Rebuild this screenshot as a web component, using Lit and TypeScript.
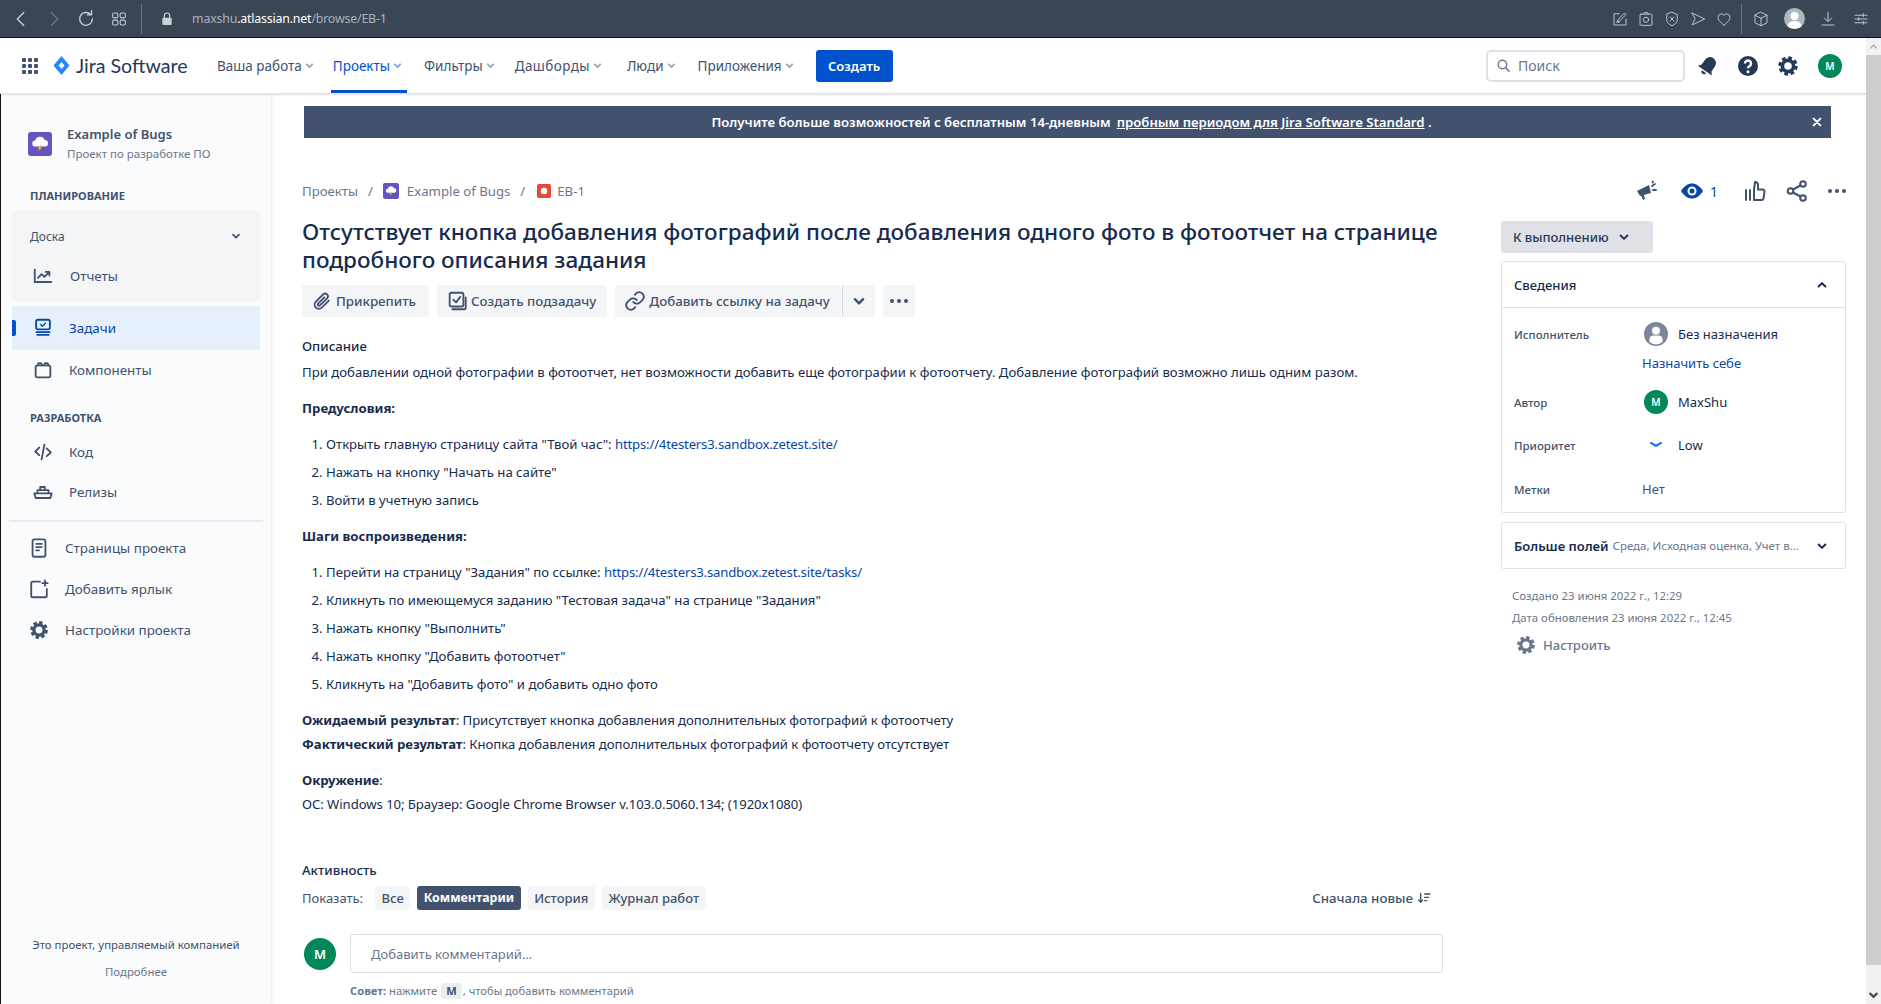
import { LitElement, css, html, svg } from "lit";
import { customElement } from "lit/decorators.js";

const icon = (body: unknown, size = 24, cls = "") =>
  html`<svg class="ic ${cls}" width=${size} height=${size} viewBox="0 0 24 24" fill="none" stroke="currentColor" stroke-width="2" stroke-linecap="round" stroke-linejoin="round">${body}</svg>`;

const chevron = svg`<path d="M7.5 10l4.5 4.5 4.5-4.5" stroke-width="2.6"/>`;
const gear = svg`<circle cx="12" cy="12" r="5.6" stroke-width="3.6"/><circle cx="12" cy="12" r="8" stroke-width="3.4" stroke-dasharray="3.6 2.68" stroke-linecap="butt"/>`;
const dots = svg`<g fill="currentColor" stroke="none"><circle cx="5" cy="12" r="2"/><circle cx="12" cy="12" r="2"/><circle cx="19" cy="12" r="2"/></g>`;
const cloud = svg`<rect width="24" height="24" rx="3" fill="#6554c0" stroke="none"/><path d="M7.4 14.6a3 3 0 0 1-.2-6 4.9 4.9 0 0 1 9.4-.6 3.3 3.3 0 0 1 .2 6.6z" fill="#fff" stroke="none"/><path d="M12.6 13l-3 3.6h2l-1.2 3 3.6-4h-2l1.4-2.6z" fill="#ffc400" stroke="none"/>`;

const planning = [
  { label: "Задачи", active: true, body: svg`<rect x="4.5" y="3" width="15" height="10.5" rx="2"/><path d="M9.5 8.2l1.8 1.8 3.3-3.2" stroke-width="1.6"/><path d="M4 16.5h16M5 19.5h14" stroke-width="1.8" stroke-linecap="butt"/>` },
  { label: "Компоненты", active: false, body: svg`<rect x="4" y="7" width="16" height="13" rx="2"/><path d="M6.5 7V5.5a1 1 0 0 1 1-1h2a1 1 0 0 1 1 1V7M13.5 7V5.5a1 1 0 0 1 1-1h2a1 1 0 0 1 1 1V7"/>` },
];
const dev = [
  { label: "Код", body: svg`<path d="M8 7l-4.500 4.500L8 15.500M16 8l4.500 4.500-4.500 4M13.500 4l-3 16"/>` },
  { label: "Релизы", body: svg`<path d="M2.500 13.500h19l-1.500 5H4zM6 13.500V10h12v3.500M9 10V6.500h5V10"/>` },
];
const project = [
  { label: "Страницы проекта", body: svg`<rect x="5" y="2.500" width="14" height="19" rx="2"/><path d="M9 7.500h6M9 11h6M9 14.500h3"/>` },
  { label: "Добавить ярлык", body: svg`<path d="M13 4H5a1.500 1.500 0 0 0-1.500 1.500v14A1.500 1.500 0 0 0 5 21h14a1.500 1.500 0 0 0 1.500-1.500V12M18.500 2.500v6M15.500 5.500h6" />` },
  { label: "Настройки проекта", body: gear },
];
const navItems = ["Ваша работа", "Проекты", "Фильтры", "Дашборды", "Люди", "Приложения"];

@customElement("app-root")
export class AppRoot extends LitElement {
  static styles = css`
    :host {
      display: block;
      width: 1881px;
      height: 1004px;
      overflow: hidden;
      background: #fff;
      color: #172b4d;
      font-family: "Noto Sans", "Open Sans", sans-serif;
      font-size: 13px;
      --blue: #0052cc;
      --muted: #42526e;
      --subtle: #6b778c;
    }
    * { box-sizing: border-box; }
    .ic { display: block; flex: none; }

    .browser {
      height: 38px;
      background: #3a4654;
      border-bottom: 1px solid #111;
      color: #c8cfd6;
      display: flex;
      align-items: center;
      padding: 0 11px 0 10px;
    }
    .browser .sep { width: 1px; height: 30px; background: #6b7580; margin: 0 17px 0 13px; }
    .browser .dim { color: #6c7682; margin-left: 11px; }
    .browser .gapped { margin-left: 10px; }
    .browser .gapped + .gapped { margin-left: 13px; }
    .url { margin-left: 17px; font-size: 12.4px; letter-spacing: -0.2px; color: #a9b2bc; }
    .url b { color: #fff; font-weight: 400; }
    .browser .tools { margin-left: auto; display: flex; align-items: center; gap: 8px; }
    .browser .tools .sep { margin: 0 2px 0 0; }
    .browser .tools .last { margin-left: 7px; }
    .browser .me { width: 21px; height: 21px; border-radius: 50%; background: #aeb6bf; margin: 0 6px; overflow: hidden; }

    .nav {
      height: 56px;
      background: #fff;
      border-bottom: 1px solid #dfe1e6;
      box-shadow: 0 1px 2px rgba(9, 30, 66, 0.13);
      display: flex;
      align-items: center;
      padding: 0 39px 0 20px;
      position: relative;
      z-index: 2;
      color: var(--muted);
    }
    .logo { display: flex; align-items: center; margin-left: 13px; gap: 6px; color: #253858; font-family: "Lato", sans-serif; font-size: 19.6px; width: 160px; }
    .nav-items { display: flex; height: 100%; }
    .nav-item {
      display: flex;
      align-items: center;
      font-size: 13.5px;
      padding: 0 4px;
      margin-right: 8px;
      position: relative;
    }
    .nav-item:nth-child(2) { margin-right: 11px; }
    .nav-item:nth-child(3) { margin-right: 9px; }
    .nav-item:nth-child(4) { margin-right: 14px; letter-spacing: 0.4px; }
    .nav-item:nth-child(5) { margin-right: 11px; }
    .nav-item.active { color: var(--blue); }
    .nav-item.active::after { content: ""; position: absolute; left: 2px; right: 2px; bottom: 0; height: 3px; background: var(--blue); }
    .nav-item svg { opacity: 0.55; }
    .create {
      margin-left: 7px;
      width: 77px;
      height: 32px;
      background: var(--blue);
      color: #fff;
      border-radius: 3px;
      font-weight: 600;
      font-size: 13px;
      display: flex;
      align-items: center;
      justify-content: center;
    }
    .search {
      margin-left: auto;
      width: 199px;
      height: 32px;
      border: 2px solid #dfe1e6;
      border-radius: 5px;
      display: flex;
      align-items: center;
      gap: 6px;
      padding-left: 7px;
      font-size: 14px;
      color: #6b778c;
    }
    .nav-icons { display: flex; align-items: center; gap: 16px; margin-left: 11px; color: #253858; }
    .nav-icons .avatar { margin-left: 2px; }
    .avatar {
      border-radius: 50%;
      background: #00875a;
      color: #fff;
      display: flex;
      align-items: center;
      justify-content: center;
      flex: none;
      font-weight: 600;
    }
    .a24 { width: 24px; height: 24px; font-size: 10px; }
    .a32 { width: 32px; height: 32px; font-size: 13px; }

    .body { display: flex; height: 910px; }
    .edge { width: 1px; background: #111; }
    .sidebar {
      flex: none;
      width: 270px;
      background: #fafbfc;
      box-shadow: 1px 0 3px rgba(9, 30, 66, 0.1);
      display: flex;
      flex-direction: column;
      color: var(--muted);
      padding-top: 30px;
    }
    .project { display: flex; align-items: center; gap: 15px; padding-left: 27px; line-height: 20px; }
    .project strong { display: block; font-weight: 600; font-size: 13px; color: var(--muted); }
    .project small { display: block; font-size: 11.5px; color: var(--subtle); }
    .section { font-size: 11px; font-weight: 700; line-height: 16px; padding-left: 29px; }
    .section.first { margin-top: 24px; }
    .section.second { margin-top: 20px; }
    .group { margin: 6px 11px 0; height: 92px; background: #f4f5f7; border-radius: 8px; padding-top: 4px; }
    .board { height: 44px; display: flex; align-items: center; justify-content: space-between; padding: 0 16px 0 18px; font-size: 12px; }
    .side-item { display: flex; align-items: center; height: 40px; font-size: 13.4px; padding-left: 20px; gap: 15px; margin: 0 11px; position: relative; border-radius: 4px; }
    .group .side-item { height: 36px; margin: 0; padding-left: 20px; gap: 16px; }
    .side-item.active { height: 44px; margin-top: 4px; background: #e6effc; color: #0747a6; }
    .side-item.active::before { content: ""; position: absolute; left: 0; top: 14px; width: 4px; height: 16px; background: var(--blue); border-radius: 0 2px 2px 0; }
    .dev { margin-top: 6px; }
    .rule { height: 2px; background: #ebecf0; margin: 8px 8px 5px 8px; }
    .plain .side-item { height: 41px; margin: 0 11px; padding-left: 16px; gap: 15px; }
    .foot { margin-top: auto; padding-bottom: 22px; text-align: center; font-size: 11.4px; line-height: 20px; }
    .foot div + div { margin-top: 7px; color: var(--subtle); }

    .main { flex: 1; min-width: 0; padding: 12px 50px 0 31px; }
    .banner {
      margin-left: 2px;
      height: 32px;
      background: #42526e;
      color: #fff;
      font-weight: 600;
      font-size: 13.15px;
      display: flex;
      align-items: center;
      justify-content: center;
      position: relative;
      padding-left: 8px;
    }
    .banner u { margin-left: 6px; }
    .banner .x { position: absolute; right: 6px; top: 8px; }
    .columns { display: flex; margin-right: -16px; }
    .left { width: 1141px; flex: none; }
    .right { width: 345px; flex: none; margin-left: 58px; }
    .crumbs { margin-top: 43px; display: flex; align-items: center; height: 20px; color: var(--subtle); font-size: 13.2px; }
    .crumbs .slash { margin: 0 10px; }
    .crumbs .chip { margin-right: 8px; }
    .crumbs .issue-chip { margin: 0 6px 0 2px; }
    h1 { margin: 17px 0 0; font-size: 22.5px; line-height: 28px; font-weight: 500; }
    .actions { display: flex; gap: 8px; margin-top: 11px; }
    .btn {
      height: 32px;
      background: #f4f5f7;
      border-radius: 3px;
      display: flex;
      align-items: center;
      gap: 3px;
      padding: 0 10px 0 9px;
      color: var(--muted);
      font-size: 13.3px;
      font-weight: 500;
    }
    .btn:first-child { padding-right: 13px; }
    .btn:nth-child(2) { padding-right: 11px; }
    .btn.joined { border-radius: 3px 0 0 3px; padding-right: 11px; }
    .btn.tail { margin-left: -7px; border-left: 1px solid #d5d8de; border-radius: 0 3px 3px 0; padding: 0 5px; }
    .btn.more { padding: 0 4px; }
    h2 { margin: 19px 0 0; font-size: 13.2px; line-height: 20px; font-weight: 500; }
    .desc { margin-top: 4px; line-height: 24px; font-size: 13.16px; }
    .desc p { margin: 12px 0 0; }
    .desc p:first-child { margin-top: 0; }
    .desc p b { font-weight: 700; }
    .desc ol { margin: 12px 0 0; padding-left: 24px; }
    .desc li + li { margin-top: 4px; }
    .desc .result { letter-spacing: -0.04px; }
    .desc .env { letter-spacing: -0.07px; }
    a { color: #0747a6; text-decoration: none; letter-spacing: -0.19px; }
    .activity { margin-top: 44px; font-size: 13.2px; line-height: 20px; font-weight: 500; }
    .filters { margin-top: 6px; display: flex; align-items: center; gap: 7px; height: 24px; }
    .filters span.lbl { margin-right: 5px; color: var(--muted); }
    .tab { height: 24px; padding: 0 6.5px; border-radius: 3px; background: #f4f5f7; color: var(--muted); font-weight: 500; line-height: 24px; }
    .tab.on { background: #42526e; color: #fff; font-weight: 700; font-size: 12.4px; }
    .sort { margin-left: auto; margin-right: 11px; display: flex; align-items: center; gap: 3px; color: var(--muted); font-weight: 500; font-size: 13.3px; }
    .comment { margin-top: 24px; display: flex; align-items: center; gap: 14px; padding-left: 2px; }
    .input { flex: 1; height: 39px; border: 1px solid #dfe1e6; border-radius: 3px; display: flex; align-items: center; padding-left: 20px; color: var(--subtle); }
    .tip { margin: 10px 0 0 48px; font-size: 11.2px; line-height: 16px; color: var(--subtle); display: flex; align-items: center; }
    .tip b { margin-right: 3px; }
    .tip kbd { font: inherit; font-weight: 700; background: #ebecf0; color: #42526e; border-radius: 3px; padding: 0 5px; margin: 0 1px 0 4px; }

    .top-icons { margin-top: 37px; height: 32px; display: flex; align-items: center; color: var(--muted); padding-left: 133px; }
    .watch { display: flex; align-items: center; color: #0747a6; gap: 6px; margin: 0 25px 0 22px; font-size: 14px; }
    .top-icons .share { margin: 0 16px 0 18px; }
    .status {
      margin-top: 14px;
      width: 152px;
      height: 32px;
      background: #dfe1e6;
      border-radius: 3px;
      display: flex;
      align-items: center;
      gap: 6px;
      padding-left: 12px;
      color: #253858;
      font-weight: 500;
    }
    .card { border: 1px solid #dfe1e6; border-radius: 3px; }
    .details { margin-top: 8px; }
    .card-head { display: flex; align-items: center; justify-content: space-between; height: 46px; padding: 0 14px 0 12px; border-bottom: 1px solid #dfe1e6; font-weight: 500; }
    .rows { padding: 12px 12px 9px; display: grid; grid-template-columns: 128px 1fr; }
    .lbl-cell { height: 28px; display: flex; align-items: center; font-size: 11.5px; color: var(--muted); font-weight: 500; }
    .val { height: 28px; display: flex; align-items: center; gap: 10px; padding-left: 2px; }
    .val.flat { padding-left: 0; color: var(--muted); }
    .row2 { margin-top: 15px; }
    .row3 { margin-top: 16px; }
    .self { grid-column: 2; margin-top: 5px; line-height: 20px; color: #0747a6; }
    .low { width: 24px; display: flex; justify-content: center; color: #0065ff; }
    .more-card { margin-top: 9px; height: 47px; display: flex; align-items: center; padding: 0 14px 0 12px; gap: 4px; }
    .more-card b { font-weight: 600; }
    .more-card span { flex: 1; font-size: 11.5px; color: var(--subtle); }
    .stamps { margin-top: 16px; padding-left: 11px; font-size: 11.4px; line-height: 22px; color: var(--subtle); }
    .config { margin: 4px 0 0 14px; height: 24px; display: flex; align-items: center; gap: 6px; color: var(--subtle); font-weight: 500; }
    .scroll-wrap { width: 15px; display: flex; flex-direction: column; position: absolute; top: 38px; right: 0; height: 966px; z-index: 3; }
    .scroll-wrap .arrow { height: 17px; background: #f1f1f1; color: #a3a3a3; display: flex; justify-content: center; align-items: center; }
    .scroll-wrap .scroll { flex: 1; background: #cdcdcd; }
    .scroll-wrap .track { height: 39px; background: #f1f1f1; color: #505050; display: flex; justify-content: center; align-items: flex-end; padding-bottom: 3px; }
  `;

  private sideItem(label: string, body: unknown, active = false) {
    return html`<div class="side-item ${active ? "active" : ""}">${icon(body, 22)}<span>${label}</span></div>`;
  }

  private browserBar() {
    const t = (b: unknown, cls = "") => icon(b, 18, cls);
    return html`<div class="browser">
      ${icon(svg`<path d="M15 5l-7 7 7 7" stroke-width="1.500"/>`, 22)}
      ${icon(svg`<path d="M9 5l7 7-7 7" stroke-width="1.500"/>`, 22, "dim")}
      <span class="gapped">${icon(svg`<path d="M19 12a7 7 0 1 1-2-5M18 3v4.500h-4.500" stroke-width="1.500"/>`, 22)}</span>
      <span class="gapped">${t(svg`<g stroke-width="1.400"><rect x="3.500" y="4" width="7" height="6.500" rx="2"/><rect x="13.500" y="4" width="7" height="6.500" rx="2"/><rect x="3.500" y="13.500" width="7" height="6.500" rx="2"/><rect x="13.500" y="13.500" width="7" height="6.500" rx="2"/></g>`)}</span>
      <span class="sep"></span>
      ${icon(svg`<rect x="5" y="10" width="14" height="11" rx="1.500" fill="currentColor" stroke="none"/><path d="M8 10V7a4 4 0 0 1 8 0v3" stroke-width="1.800"/>`, 16)}
      <span class="url">maxshu<b>.atlassian.net</b>/browse/EB-1</span>
      <div class="tools">
        ${t(svg`<g stroke-width="1.200"><path d="M20 12v8H4V5h7"/><path d="M8 16l2-4 8-8 2 2-8 8zM8 16l3.500 0"/></g>`)}
        ${t(svg`<g stroke-width="1.200"><rect x="4" y="5.500" width="16" height="15" rx="1.500"/><circle cx="12" cy="13" r="3.500"/><path d="M9 5.500l1-2h4l1 2"/></g>`)}
        ${t(svg`<g stroke-width="1.200"><path d="M12 3l7 3v7c0 4-3.500 6.500-7 8-3.500-1.500-7-4-7-8V6z"/><path d="M9.500 9.500l5 5M14.500 9.500l-5 5"/></g>`)}
        ${t(svg`<path d="M4 4l17 8-17 8 4-8z" stroke-width="1.200"/>`)}
        ${t(svg`<path d="M12 20s-8-5-8-10.500A4.500 4.500 0 0 1 12 7a4.500 4.500 0 0 1 8 2.500C20 15 12 20 12 20z" stroke-width="1.200"/>`)}
        <span class="sep"></span>
        ${t(svg`<g stroke-width="1.200"><path d="M12 3l8 4v10l-8 4-8-4V7z"/><path d="M4 7l8 4 8-4M12 11v10"/></g>`)}
        <span class="me"><svg width="21" height="21" viewBox="0 0 21 21"><circle cx="10.500" cy="8" r="4" fill="#fff"/><path d="M3 21c0-6 3-8 7.500-8s7.500 2 7.500 8z" fill="#fff"/></svg></span>
        ${t(svg`<path d="M12 3v12M7 10.500l5 5 5-5M4 20h16" stroke-width="1.300"/>`)}
        ${t(svg`<path d="M4 7h16M4 12h16M4 17h16M15 5v4M9 10v4M15 15v4" stroke-width="1.200"/>`, "last")}
      </div>
    </div>`;
  }

  private navBar() {
    return html`<div class="nav">
      <svg width="20" height="20" viewBox="0 0 20 20" fill="#42526e">
        ${[2, 8, 14].map((y) => [2, 8, 14].map((x) => svg`<rect x=${x} y=${y} width="4" height="4" rx="1"/>`))}
      </svg>
      <div class="logo">
        <svg width="17" height="21" viewBox="0 0 17 21"><path d="M8.500 1L16.500 10.500 8.500 20 .5 10.500z" fill="#2684ff"/><path d="M8.500 7l3 3.500-3 3.500-3-3.500z" fill="#fff"/></svg>
        <span>Jira Software</span>
      </div>
      <div class="nav-items">
        ${navItems.map(
          (n, i) => html`<div class="nav-item ${i === 1 ? "active" : ""}">${n}${icon(chevron, 15)}</div>`
        )}
      </div>
      <div class="create">Создать</div>
      <div class="search">
        ${icon(svg`<circle cx="10.500" cy="10.500" r="6"/><path d="M15 15l5 5"/>`, 17)}<span>Поиск</span>
      </div>
      <div class="nav-icons">
        ${icon(svg`<g transform="rotate(35 12 12)" fill="currentColor" stroke="none"><path d="M12 2.500a6 6 0 0 0-6 6v6l-2.500 3h17l-2.500-3v-6a6 6 0 0 0-6-6z"/><path d="M9.500 19a2.500 2.500 0 0 0 5 0z"/></g>`, 24)}
        ${icon(svg`<circle cx="12" cy="12" r="10" fill="currentColor" stroke="none"/><path d="M9 9.500a3 3 0 1 1 4.500 2.600c-1 .6-1.500 1.200-1.500 2.200" stroke="#fff" stroke-width="2.400" stroke-linecap="butt"/><circle cx="12" cy="17.800" r="1.500" fill="#fff" stroke="none"/>`, 24)}
        ${icon(gear, 24)}
        <div class="avatar a24">M</div>
      </div>
    </div>`;
  }

  private sidebar() {
    return html`<aside class="sidebar">
      <div class="project">
        ${icon(cloud, 24)}
        <div><strong>Example of Bugs</strong><small>Проект по разработке ПО</small></div>
      </div>
      <div class="section first">ПЛАНИРОВАНИЕ</div>
      <div class="group">
        <div class="board"><span>Доска</span>${icon(chevron, 16)}</div>
        ${this.sideItem("Отчеты", svg`<path d="M3 5v13.500h18M6.500 14l4-4 3 3 5-5M15 7.500h4v4" stroke-width="2"/>`)}
      </div>
      ${planning.map((p) => this.sideItem(p.label, p.body, p.active))}
      <div class="section second">РАЗРАБОТКА</div>
      <div class="dev">${dev.map((p) => this.sideItem(p.label, p.body))}</div>
      <div class="rule"></div>
      <div class="plain">${project.map((p) => this.sideItem(p.label, p.body))}</div>
      <div class="foot">
        <div>Это проект, управляемый компанией</div>
        <div>Подробнее</div>
      </div>
    </aside>`;
  }

  private issue() {
    return html`<div class="left">
      <div class="crumbs">
        <span>Проекты</span><span class="slash">/</span>
        <span class="chip">${icon(cloud, 16)}</span><span>Example of Bugs</span><span class="slash">/</span>
        <span class="issue-chip">${icon(svg`<rect width="24" height="24" rx="3" fill="#e5493a" stroke="none"/><circle cx="12" cy="12" r="5.500" fill="#fff" stroke="none"/>`, 14)}</span><span>EB-1</span>
      </div>
      <h1>Отсутствует кнопка добавления фотографий после добавления одного фото в фотоотчет на странице подробного описания задания</h1>
      <div class="actions">
        <div class="btn">${icon(svg`<path d="M19.500 11.500l-7.800 7.800a4.600 4.600 0 0 1-6.500-6.500l8-8a3 3 0 0 1 4.300 4.300l-7.800 7.700a1.400 1.400 0 0 1-2-2l6.800-6.700"/>`, 22)}Прикрепить</div>
        <div class="btn">${icon(svg`<rect x="4" y="3" width="15" height="15" rx="2"/><path d="M8 10.500l3 3 4.500-6M7 21h13a1.500 1.500 0 0 0 1.500-1.500V8"/>`, 22)}Создать подзадачу</div>
        <div class="btn joined">${icon(svg`<path d="M10 13a5 5 0 0 0 7.500.5l3-3a5 5 0 0 0-7-7l-1.700 1.700"/><path d="M14 11a5 5 0 0 0-7.500-.5l-3 3a5 5 0 0 0 7 7l1.700-1.700"/>`, 22)}Добавить ссылку на задачу</div>
        <div class="btn tail">${icon(chevron, 22)}</div>
        <div class="btn more">${icon(dots, 24)}</div>
      </div>
      <h2>Описание</h2>
      <div class="desc">
        <p>При добавлении одной фотографии в фотоотчет, нет возможности добавить еще фотографии к фотоотчету. Добавление фотографий возможно лишь одним разом.</p>
        <p><b>Предусловия:</b></p>
        <ol>
          <li>Открыть главную страницу сайта "Твой час": <a>https://4testers3.sandbox.zetest.site/</a></li>
          <li>Нажать на кнопку "Начать на сайте"</li>
          <li>Войти в учетную запись</li>
        </ol>
        <p><b>Шаги воспроизведения:</b></p>
        <ol>
          <li>Перейти на страницу "Задания" по ссылке: <a>https://4testers3.sandbox.zetest.site/tasks/</a></li>
          <li>Кликнуть по имеющемуся заданию "Тестовая задача" на странице "Задания"</li>
          <li>Нажать кнопку "Выполнить"</li>
          <li>Нажать кнопку "Добавить фотоотчет"</li>
          <li>Кликнуть на "Добавить фото" и добавить одно фото</li>
        </ol>
        <p class="result"><b>Ожидаемый результат</b>: Присутствует кнопка добавления дополнительных фотографий к фотоотчету<br /><b>Фактический результат</b>: Кнопка добавления дополнительных фотографий к фотоотчету отсутствует</p>
        <p class="env"><b>Окружение</b>:<br />ОС: Windows 10; Браузер: Google Chrome Browser v.103.0.5060.134; (1920x1080)</p>
      </div>
      <div class="activity">Активность</div>
      <div class="filters">
        <span class="lbl">Показать:</span>
        <span class="tab">Все</span><span class="tab on">Комментарии</span><span class="tab">История</span><span class="tab">Журнал работ</span>
        <span class="sort">Сначала новые ${icon(svg`<path d="M7 5v13M4 15l3 3.500 3-3.500M13 6h8M13 11h6M13 16h3" stroke-width="2"/>`, 16)}</span>
      </div>
      <div class="comment">
        <div class="avatar a32">M</div>
        <div class="input">Добавить комментарий...</div>
      </div>
      <div class="tip"><b>Совет:</b> нажмите <kbd>M</kbd>, чтобы добавить комментарий</div>
    </div>`;
  }

  private details() {
    return html`<div class="right">
      <div class="top-icons">
        ${icon(svg`<g fill="currentColor" stroke="none"><path d="M3 12l12-6 2 8-11 3z"/><path d="M7 16l2 5 2-1-1.500-5z"/></g><path d="M18 7l3-2M19 11h3M18.500 3.500l.5-1" stroke-width="1.800"/>`, 24)}
        <div class="watch">${icon(svg`<path d="M1 12c3-5 7-7.500 11-7.500S20 7 23 12c-3 5-7 7.500-11 7.500S4 17 1 12z" fill="currentColor" stroke="none"/><circle cx="12" cy="12" r="4.500" fill="#fff" stroke="none"/><circle cx="12" cy="12" r="2.500" fill="currentColor" stroke="none"/>`, 24)}1</div>
        ${icon(svg`<path d="M7 21V11M11 21h7.500a2 2 0 0 0 2-1.700l1-6.500a2 2 0 0 0-2-2.300H15V6a3 3 0 0 0-3-3l-1 7.500zM3 11v10" />`, 24)}
        <span class="share">${icon(svg`<circle cx="18" cy="5" r="2.800"/><circle cx="5.500" cy="12" r="2.800"/><circle cx="18" cy="19" r="2.800"/><path d="M8 10.500l7.500-4M8 13.500l7.500 4"/>`, 24)}</span>
        ${icon(dots, 24)}
      </div>
      <div class="status">К выполнению ${icon(chevron, 18)}</div>
      <div class="card details">
        <div class="card-head"><span>Сведения</span>${icon(svg`<path d="M7.500 14L12 9.500l4.500 4.500" stroke-width="2.600"/>`, 18)}</div>
        <div class="rows">
          <div class="lbl-cell">Исполнитель</div>
          <div class="val">
            <svg width="24" height="24" viewBox="0 0 24 24"><circle cx="12" cy="12" r="12" fill="#7a869a"/><circle cx="12" cy="8.700" r="4" fill="#fff"/><path d="M5.500 20v-2.500a4 4 0 0 1 4-4h5a4 4 0 0 1 4 4V20a10 10 0 0 1-13 0z" fill="#fff"/></svg>
            Без назначения
          </div>
          <div class="self">Назначить себе</div>
          <div class="lbl-cell row2">Автор</div>
          <div class="val row2"><div class="avatar a24">M</div>MaxShu</div>
          <div class="lbl-cell row2">Приоритет</div>
          <div class="val row2"><span class="low">${icon(svg`<path d="M6 9.500l6 3.500 6-3.500" stroke-width="2.200"/>`, 20)}</span>Low</div>
          <div class="lbl-cell row3">Метки</div>
          <div class="val flat row3">Нет</div>
        </div>
      </div>
      <div class="card more-card">
        <b>Больше полей</b><span>Среда, Исходная оценка, Учет в...</span>${icon(chevron, 18)}
      </div>
      <div class="stamps">
        <div>Создано 23 июня 2022 г., 12:29</div>
        <div>Дата обновления 23 июня 2022 г., 12:45</div>
      </div>
      <div class="config">${icon(gear, 22)}Настроить</div>
    </div>`;
  }

  render() {
    return html`
      ${this.browserBar()} ${this.navBar()}
      <div class="body">
        <div class="edge"></div>
        ${this.sidebar()}
        <main class="main">
          <div class="banner">
            <span>Получите больше возможностей с бесплатным 14-дневным</span>
            <u>пробным периодом для Jira Software Standard</u><span>&nbsp;.</span>
            ${icon(svg`<path d="M7 7l10 10M17 7L7 17" stroke="#fff" stroke-width="3"/>`, 16, "x")}
          </div>
          <div class="columns">${this.issue()} ${this.details()}</div>
        </main>
      </div>
      <div class="scroll-wrap">
        <div class="arrow">${icon(svg`<path d="M6 15l6-6 6 6" stroke-width="3"/>`, 11)}</div>
        <div class="scroll"></div>
        <div class="track">${icon(svg`<path d="M5 8l7 7 7-7" stroke-width="5"/>`, 11)}</div>
      </div>
    `;
  }
}
